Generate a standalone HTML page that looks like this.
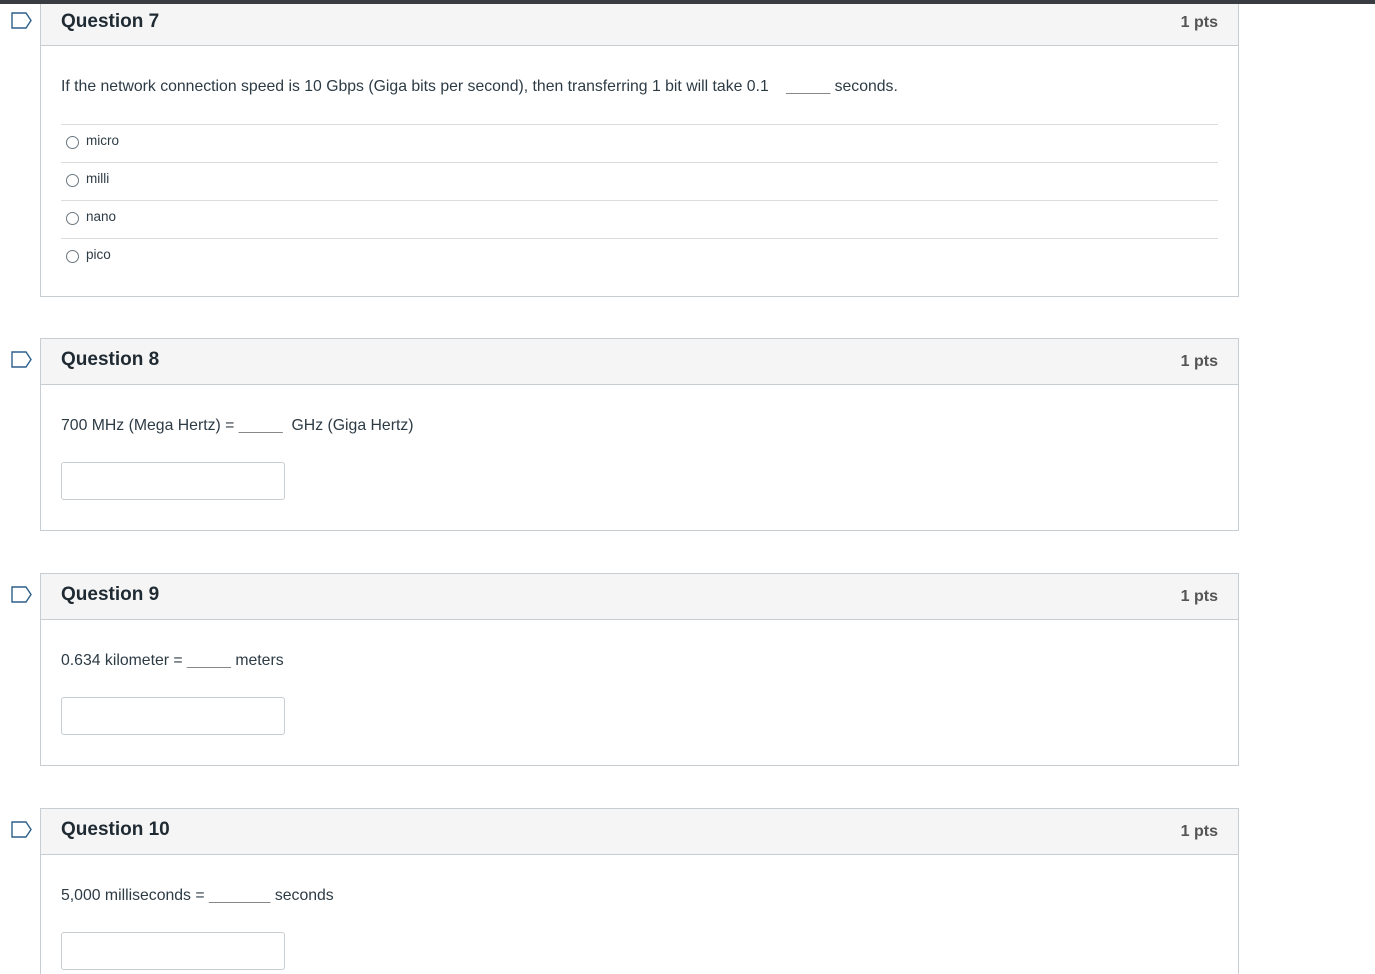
<!DOCTYPE html>
<html><head><style>
html,body{margin:0;width:1375px;height:974px;overflow:hidden}
body{background:#fff;font-family:"Liberation Sans",sans-serif;color:#2d3b45;position:relative}
.top{position:absolute;left:0;top:0;width:1375px;height:4px;background:#393c40;z-index:5}
.q{position:absolute;left:40px;width:1197px;border:1px solid #c7cdd1;background:#fff}
.hd{height:45px;background:#f5f5f5;border-bottom:1px solid #c7cdd1;position:relative}
.hd .t{position:absolute;left:20px;top:10px;font-size:19px;font-weight:bold;color:#1f2a33}
.hd .p{position:absolute;right:20px;top:14px;font-size:16px;font-weight:bold;color:#555}
.txt{position:absolute;left:20px;font-size:15.8px;color:#2d3b45}
.ans{position:absolute;left:20px;width:224px;height:38px;box-sizing:border-box;border:1px solid #c7cdd1;border-radius:3px}
.opt{position:absolute;left:20px;width:1157px;border-top:1px solid #dcdcdc;height:37px;font-size:13.5px}
.opt span.r{position:absolute;left:5px;top:11px;width:11px;height:11px;border:1px solid #6b7780;border-radius:50%}
.opt span.l{position:absolute;left:25px;top:8px}
.flag{position:absolute;left:11px}
</style></head><body>
<div class="top"></div>

<svg class="flag" style="top:12px" width="22" height="17"><path d="M1 1H15L20 8.5L15 16H1Z" fill="none" stroke="#2d5f8a" stroke-width="1.4"/></svg>
<div class="q" style="top:-1px;height:296px">
 <div class="hd"><div class="t" style="top:11px">Question 7</div><div class="p" style="top:14px">1 pts</div></div>
 <div class="txt" style="top:78px">If the network connection speed is 10 Gbps (Giga bits per second), then transferring 1 bit will take 0.1 &nbsp;&nbsp;&nbsp;<span style="color:#888">_____</span> seconds.</div>
 <div class="opt" style="top:124px"><span class="r"></span><span class="l">micro</span></div>
 <div class="opt" style="top:162px"><span class="r"></span><span class="l">milli</span></div>
 <div class="opt" style="top:200px"><span class="r"></span><span class="l">nano</span></div>
 <div class="opt" style="top:238px"><span class="r"></span><span class="l">pico</span></div>
</div>

<svg class="flag" style="top:351px" width="22" height="17"><path d="M1 1H15L20 8.5L15 16H1Z" fill="none" stroke="#2d5f8a" stroke-width="1.4"/></svg>
<div class="q" style="top:338px;height:191px">
 <div class="hd"><div class="t">Question 8</div><div class="p">1 pts</div></div>
 <div class="txt" style="top:78px">700 MHz (Mega Hertz) = <span style="color:#888">_____</span>&nbsp; GHz (Giga Hertz)</div>
 <div class="ans" style="top:123px"></div>
</div>

<svg class="flag" style="top:586px" width="22" height="17"><path d="M1 1H15L20 8.5L15 16H1Z" fill="none" stroke="#2d5f8a" stroke-width="1.4"/></svg>
<div class="q" style="top:573px;height:191px">
 <div class="hd"><div class="t">Question 9</div><div class="p">1 pts</div></div>
 <div class="txt" style="top:78px">0.634 kilometer = <span style="color:#888">_____</span> meters</div>
 <div class="ans" style="top:123px"></div>
</div>

<svg class="flag" style="top:821px" width="22" height="17"><path d="M1 1H15L20 8.5L15 16H1Z" fill="none" stroke="#2d5f8a" stroke-width="1.4"/></svg>
<div class="q" style="top:808px;height:200px">
 <div class="hd"><div class="t">Question 10</div><div class="p">1 pts</div></div>
 <div class="txt" style="top:78px">5,000 milliseconds = <span style="color:#888">_______</span> seconds</div>
 <div class="ans" style="top:123px"></div>
</div>
</body></html>
